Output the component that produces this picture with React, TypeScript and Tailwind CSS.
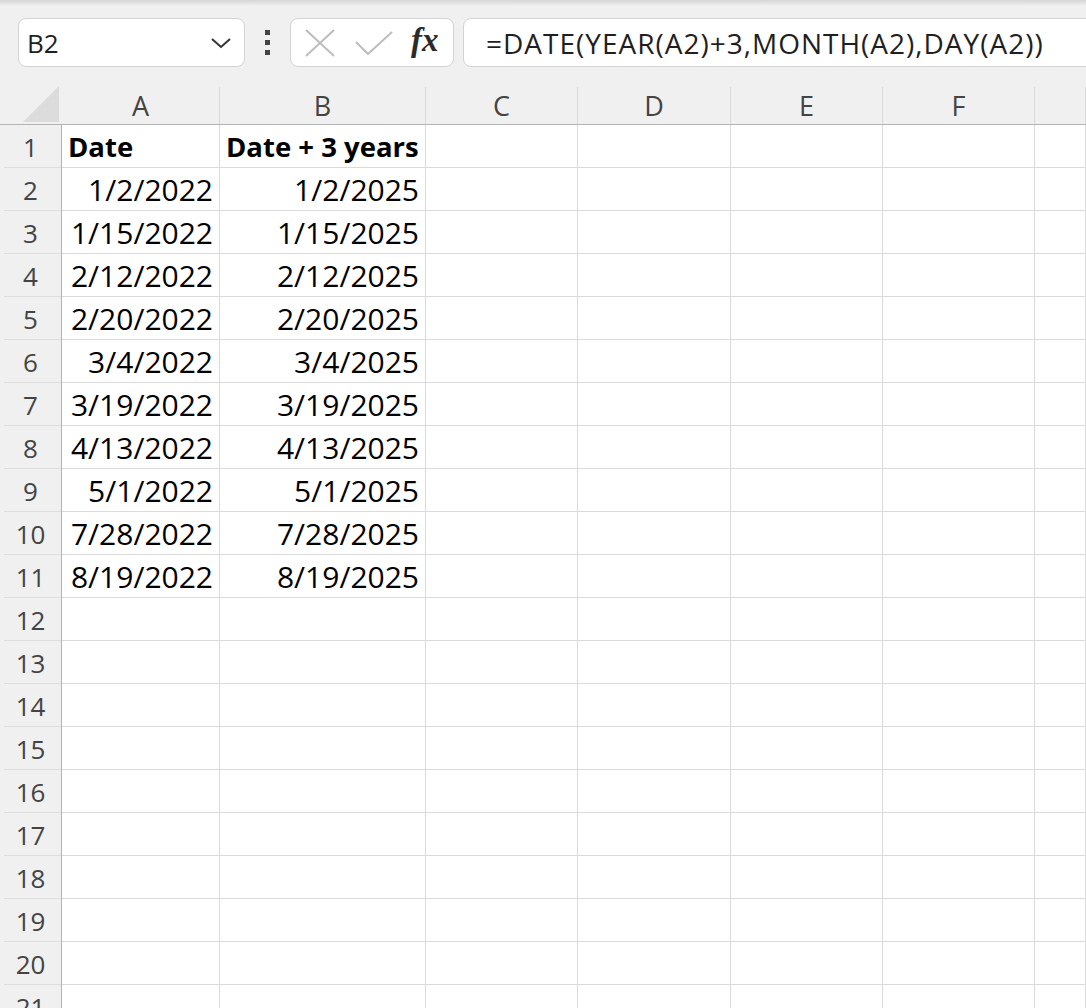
import React from "react";

const cols = ["A", "B", "C", "D", "E", "F", ""];
const widths = ["w-[158px]", "w-[206px]", "w-[152px]", "w-[153px]", "w-[152px]", "w-[152px]", "flex-1"];

const data: [string, string][] = [
  ["1/2/2022", "1/2/2025"],
  ["1/15/2022", "1/15/2025"],
  ["2/12/2022", "2/12/2025"],
  ["2/20/2022", "2/20/2025"],
  ["3/4/2022", "3/4/2025"],
  ["3/19/2022", "3/19/2025"],
  ["4/13/2022", "4/13/2025"],
  ["5/1/2022", "5/1/2025"],
  ["7/28/2022", "7/28/2025"],
  ["8/19/2022", "8/19/2025"],
];

const font = { fontFamily: '"Open Sans", "Noto Sans", sans-serif' };

function Toolbar() {
  return (
    <div className="flex items-start h-[81px] pl-[18px] pt-[12px]">
      <div className="flex items-center justify-between w-[227px] h-[49px] bg-white border border-[#d4d4d4] rounded-lg pl-[8px] pr-[12px]">
        <span className="text-[26px] leading-none text-[#1f1f1f]">B2</span>
        <svg width="22" height="12" viewBox="0 0 22 12">
          <path d="M2 2 L11 10 L20 2" fill="none" stroke="#333" strokeWidth="2" />
        </svg>
      </div>
      <div className="flex flex-col gap-[5px] w-[45px] h-[49px] justify-center items-center">
        <div className="w-[5px] h-[5px] bg-[#444]" />
        <div className="w-[5px] h-[5px] bg-[#444]" />
        <div className="w-[5px] h-[5px] bg-[#444]" />
      </div>
      <div className="flex items-center w-[164px] h-[49px] bg-white border border-[#d4d4d4] rounded-lg pl-[14px]">
        <svg width="30" height="28" viewBox="0 0 30 28">
          <path d="M1 1 L29 27 M29 1 L1 27" stroke="#bdbdbd" strokeWidth="2" />
        </svg>
        <svg width="38" height="24" viewBox="0 0 38 24" className="ml-[20px]">
          <path d="M1 11 L13 23 L37 1" fill="none" stroke="#bdbdbd" strokeWidth="2" />
        </svg>
        <span
          className="ml-[18px] text-[33px] italic font-bold text-[#2b2b2b] leading-none -mt-[4px]"
          style={{ fontFamily: '"Liberation Serif", serif' }}
        >
          fx
        </span>
      </div>
      <div className="flex items-center flex-1 h-[49px] ml-[9px] -mr-[20px] bg-white border border-[#d4d4d4] rounded-lg pl-[22px]">
        <span className="text-[28px] leading-none tracking-[1px] text-[#1f1f1f]">
          =DATE(YEAR(A2)+3,MONTH(A2),DAY(A2))
        </span>
      </div>
    </div>
  );
}

function Row({ n, a, b, bold }: { n: number; a?: string; b?: string; bold?: boolean }) {
  return (
    <div className="flex h-[43px]">
      <div className="w-[62px] shrink-0 border-r border-r-[#b4b4b4] bg-[#f0f0f0] flex items-end justify-center pb-[8px] text-[26px] leading-none text-[#444] relative">
        <div className="absolute bottom-0 left-[4px] right-0 h-px bg-[#dedede]" />
        {n}
      </div>
      {widths.map((w, i) => (
        <div
          key={i}
          className={`${w} shrink-0 border-r border-b border-[#dadada] bg-white flex items-end px-[6px] leading-none text-black ${
            bold ? "font-bold justify-start text-[27.5px] pb-[7px]" : "justify-end text-[30px] pb-[5px]"
          }`}
        >
          {i === 0 ? a : i === 1 ? b : null}
        </div>
      ))}
    </div>
  );
}

export default function App() {
  return (
    <div className="w-[1086px] h-[1008px] overflow-hidden bg-[#f0f0f0]" style={font}>
      <div className="h-[6px] bg-gradient-to-b from-[#d6d6d6] to-[#f0f0f0]" />
      <Toolbar />
      <div className="flex h-[38px] border-b border-b-[#b4b4b4]">
        <div className="w-[62px] shrink-0 flex items-end pl-[23px] pb-[2px]">
          <svg width="36" height="36" viewBox="0 0 36 36">
            <path d="M36 0 L36 36 L0 36 Z" fill="#dcdcdc" />
          </svg>
        </div>
        {cols.map((c, i) => (
          <div
            key={i}
            className={`${widths[i]} shrink-0 border-r border-[#dadada] flex items-center justify-center text-[27px] leading-none text-[#444]`}
          >
            {c}
          </div>
        ))}
      </div>
      <Row n={1} a="Date" b="Date + 3 years" bold />
      {data.map((d, i) => (
        <Row key={i} n={i + 2} a={d[0]} b={d[1]} />
      ))}
      {Array.from({ length: 10 }, (_, i) => (
        <Row key={i} n={i + 12} />
      ))}
    </div>
  );
}
